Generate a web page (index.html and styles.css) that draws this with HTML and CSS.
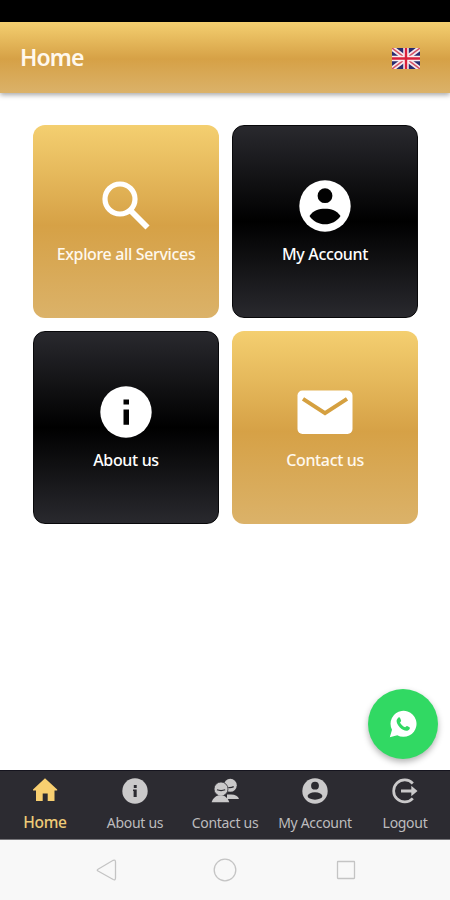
FILE: index.html
```
<!DOCTYPE html>
<html lang="en">
	<head>
		<title>Home</title>
		<meta charset="utf-8">
		<meta name="viewport" content="width=device-width, initial-scale=1">
		<link rel="stylesheet" href="styles.css">
	</head>
	<body>
		<div class="statusbar"></div>
		<header class="header">
			<h1>Home</h1>
			<svg class="flag" viewBox="0 0 28 21">
				<rect width="28" height="21" fill="#292c70"/>
				<path d="M0 0L28 21M28 0L0 21" stroke="#f5e9ee" stroke-width="5"/>
				<path d="M0 0L28 21M28 0L0 21" stroke="#d65365" stroke-width="1.5"/>
				<path d="M14 0V21M0 10.5H28" stroke="#f8edf0" stroke-width="5.5"/>
				<path d="M14 0V21M0 10.5H28" stroke="#d9203b" stroke-width="2.4"/>
			</svg>
		</header>

		<main class="main">
			<div class="tiles">
				<a class="tile gold">
					<svg viewBox="0 0 56 56">
						<circle cx="22" cy="21" r="15" fill="none" stroke="#fff" stroke-width="5.2"/>
						<path d="M32.5 32.5L49.5 49.5" stroke="#fff" stroke-width="5.8"/>
					</svg>
					<span>Explore all Services</span>
				</a>
				<a class="tile dark">
					<svg viewBox="0 0 56 56">
						<circle cx="28" cy="28" r="25.7" fill="#fff"/>
						<circle cx="28" cy="17.7" r="7.4" fill="#020202"/>
						<path d="M12.5 38C16 32.5 22 30.7 28 30.7S40 32.5 43.5 38C40 43.5 34 46.3 28 46.3S16 43.5 12.5 38Z" fill="#020202"/>
					</svg>
					<span>My Account</span>
				</a>
				<a class="tile dark">
					<svg viewBox="0 0 56 56">
						<circle cx="28" cy="28" r="25.7" fill="#fff"/>
						<path d="M25.5 15.5H31V20.5H25.5ZM25.5 25.5H31V40.7H25.5Z" fill="#020202"/>
					</svg>
					<span>About us</span>
				</a>
				<a class="tile gold">
					<svg viewBox="0 0 56 56">
						<rect x=".5" y="6.5" width="55" height="43.5" rx="5" fill="#fff"/>
						<path d="M6 14.8L28 29.2L50 14.8" fill="none" stroke="#d5a040" stroke-width="4"/>
					</svg>
					<span>Contact us</span>
				</a>
			</div>
		</main>

		<a class="whatsapp">
			<svg viewBox="0 0 28 28">
				<path d="M.8 27.2L3 19.8A13 13 0 1 1 8.3 25.2Z" fill="#fff"/>
				<path d="M8.6 8.4C9.7 6.9 10.7 7.1 11.2 8.2L12.1 10.5C12.4 11.3 11.2 12.1 11 12.6C12.1 14.8 13.8 16.4 16.1 17.3C16.7 17.1 17.4 15.9 18.1 16.1L20.5 17.3C21.5 17.8 20.6 20.4 18.3 20.7C13.8 21.5 7 14.6 7.6 10.4C7.7 9.6 8 9 8.6 8.4Z" fill="#31d963"/>
			</svg>
		</a>

		<nav class="nav">
			<a class="nav-item active">
				<svg viewBox="0 0 28 28"><path d="M14 2.3L26.2 13.5V14.5H23.5V25H16.7V17.5H11.7V25H5V14.5H2V13.5Z"/></svg>
				<span>Home</span>
			</a>
			<a class="nav-item">
				<svg viewBox="0 0 28 28">
					<circle cx="14" cy="15" r="12.7"/>
					<path d="M12.8 9H15.7V12H12.8ZM12 13.4H15.7V21H12.6V15H12Z" fill="#2c2b31"/>
				</svg>
				<span>About us</span>
			</a>
			<a class="nav-item">
				<svg viewBox="0 0 28 28">
					<circle cx="19.3" cy="9.3" r="6.5"/>
					<path d="M16 23V18.5H20C24.5 18.5 27 20 28 23Z"/>
					<circle cx="10" cy="13" r="7" stroke="#2c2b31" stroke-width=".8"/>
					<path d="M.6 26.3C2 22 5 19.3 9.5 19.3S16.8 22 18.3 26.3Z"/>
					<path d="M6 13.8Q10 15.3 14.2 13.8M17.3 11.5Q20 12 22.7 10.6" fill="none" stroke="#2c2b31" stroke-width="1.2"/>
				</svg>
				<span>Contact us</span>
			</a>
			<a class="nav-item">
				<svg viewBox="0 0 28 28">
					<circle cx="14" cy="15" r="12.7"/>
					<circle cx="14" cy="9.7" r="3.9" fill="#2c2b31"/>
					<ellipse cx="14" cy="20" rx="7.4" ry="3.7" fill="#2c2b31"/>
				</svg>
				<span>My Account</span>
			</a>
			<a class="nav-item">
				<svg viewBox="0 0 28 28">
					<path d="M21.8 7.5A11 11 0 1 0 21.8 22.3" fill="none" stroke="#cac9ca" stroke-width="2.7"/>
					<path d="M10 13.6H20.3V9.7L26.5 15L20.3 20.3V16.4H10Z"/>
				</svg>
				<span>Logout</span>
			</a>
		</nav>

		<div class="sysbar">
			<svg viewBox="0 0 24 24"><path d="M3 11.3L18.2 2.3Q20.5 1.3 20.5 4V20Q20.5 22.5 18.2 21.5L3 13Q1.5 12.2 3 11.3Z"/></svg>
			<svg viewBox="0 0 24 24"><circle cx="12" cy="12" r="10.8"/></svg>
			<svg viewBox="0 0 24 24"><rect x="3.5" y="3.5" width="17" height="17" rx=".5"/></svg>
		</div>
	</body>
</html>
```
FILE: styles.css
```
* {box-sizing: border-box;}

body {
	display: flex;
	flex-direction: column;
	height: 900px;
	margin: 0;
	background: #fff;
	font-family: "Noto Sans", sans-serif;
	position: relative;
}

svg {
	display: block;
	flex-shrink: 0;
}

.statusbar {
	height: 22px;
	background: #000;
}

.header {
	display: flex;
	align-items: center;
	justify-content: space-between;
	height: 71px;
	padding: 0 30px 0 20px;
	background: linear-gradient(#f4cf70, #d6a146 52%, #dbb269);
	box-shadow: 0 2px 5px rgba(0,0,0,0.35);
}

.header h1 {
	margin: 0 0 1px;
	color: #fff8ed;
	font-size: 23px;
	font-weight: 600;
	letter-spacing: -0.9px;
	line-height: 30px;
}

.flag {
	width: 28px;
	height: 21px;
	margin-top: 1px;
}

.main {
	flex: 1;
	padding: 32px 32px 0 33px;
}

.tiles {
	display: grid;
	grid-template-columns: 186px 186px;
	grid-auto-rows: 193px;
	gap: 13px;
}

.tile {
	display: flex;
	flex-direction: column;
	align-items: center;
	padding-top: 53px;
	border-radius: 12px;
	color: #fff;
	font-size: 16px;
	font-weight: 500;
	letter-spacing: -0.35px;
	line-height: 22px;
	white-space: nowrap;
}

.tile svg {
	width: 56px;
	height: 56px;
	margin-bottom: 9px;
}

.gold {
	background: linear-gradient(#f4cf70, #d6a146 52%, #dbb269);
	color: #fff8ed;
}

.dark {
	background: linear-gradient(#29292e, #000 50%, #29292e);
	border: 1px solid #08080a;
	padding-top: 52px;
}

.whatsapp {
	position: absolute;
	right: 12px;
	top: 689px;
	display: flex;
	align-items: center;
	justify-content: center;
	width: 70px;
	height: 70px;
	border-radius: 50%;
	background: #31d963;
	box-shadow: 0 3px 6px rgba(0,0,0,0.3);
}

.whatsapp svg {
	width: 28px;
	height: 28px;
}

.nav {
	display: grid;
	grid-template-columns: repeat(5, 1fr);
	height: 70px;
	background: #2c2b31;
	border-top: 1px solid #15141e;
	border-bottom: 1px solid #77767a;
}

.nav-item {
	display: flex;
	flex-direction: column;
	align-items: center;
	padding-top: 5px;
	color: #bdbcbe;
	fill: #cac9ca;
	font-size: 14px;
	letter-spacing: -0.3px;
	line-height: 20px;
	white-space: nowrap;
}

.nav-item svg {
	width: 28px;
	height: 28px;
	margin-bottom: 9px;
}

.nav-item.active {
	color: #efcb78;
	fill: #f8cf70;
	font-size: 15.5px;
	font-weight: 500;
}

.nav-item.active svg {
	margin-bottom: 8px;
}

.sysbar {
	display: flex;
	align-items: center;
	gap: 94px;
	height: 60px;
	padding-left: 95px;
	background: #f8f8f8;
}

.sysbar svg {
	width: 24px;
	height: 24px;
	fill: none;
	stroke: #c4c4c4;
	stroke-width: 1.3;
}

.sysbar svg:last-child {
	margin-left: 3px;
}
```
